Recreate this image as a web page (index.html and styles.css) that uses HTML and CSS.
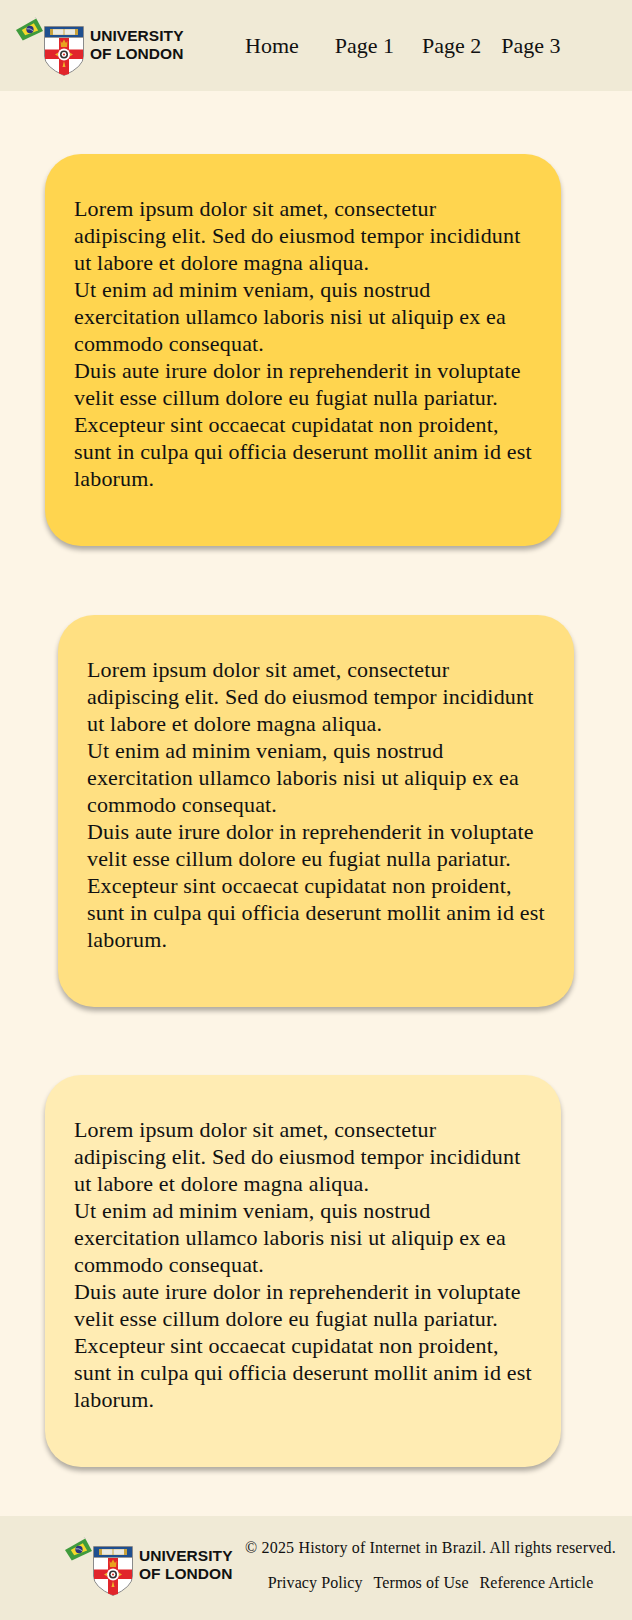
FILE: index.html
```html
<!DOCTYPE html>
<html>
  <head>
    <meta charset="UTF-8">
    <title>History of Internet in Brazil</title>
    <link rel="stylesheet" href="styles.css">
  </head>
  <body>
    <svg class="defs" width="0" height="0">
      <symbol id="flag" viewBox="0 0 28 24">
        <path d="M0 13 L21 1 L28 14 L7 24 Z" fill="#3f9b3c"/>
        <path d="M6 13 L18.5 6 L23 13.5 L9.5 18.5 Z" fill="#f4d92a"/>
        <circle cx="14.5" cy="12.5" r="3.8" fill="#27357e"/>
        <path d="M11 11.8 Q14.5 11 17.8 13.8" stroke="#e8e8e8" stroke-width=".7" fill="none"/>
        <path d="M21 1 L20 0" stroke="#bbb" stroke-width="1"/>
      </symbol>
      <symbol id="shield" viewBox="0 0 40 50">
        <path d="M.5 .5 H39.5 V30 Q39.5 41 20 49.5 Q.5 41 .5 30 Z" fill="#fff" stroke="#8a8a8a"/>
        <path d="M1 1 H39 V11 H1 Z" fill="#1f4f8f"/>
        <path d="M6 3 H34 V9 H6 Z" fill="#c9a23c"/>
        <path d="M9 3.2 H19.5 V8.8 H9 Z M20.5 3.2 H31 V8.8 H20.5 Z" fill="#e9e9e4"/>
        <path d="M1 11 H39 V12 H1 Z" fill="#9a9a9a"/>
        <path d="M15 12 H25 V48 L20 49.2 L15 47.5 Z" fill="#e1252b"/>
        <path d="M1 23.5 H39 V33 H1 Z" fill="#e1252b"/>
        <path d="M16.5 15 L18 17 L20 13.5 L22 17 L23.5 15 L23 21 H17 Z" fill="#e9a21f"/>
        <circle cx="20" cy="28.5" r="6" fill="#fff"/>
        <circle cx="20" cy="28.5" r="4" fill="#333"/>
        <circle cx="20" cy="28.5" r="2.4" fill="#fff"/>
        <circle cx="20" cy="28.5" r="1.1" fill="#d8332c"/>
        <path d="M20 35 L21.5 41 H18.5 Z M11 28.5 L14 26.8 V30.2 Z M29 28.5 L26 26.8 V30.2 Z" fill="#f0b429"/>
      </symbol>
    </svg>

    <header class="site-header">
      <a class="logo" href="#">
        <svg class="logo-flag"><use href="#flag"/></svg>
        <svg class="logo-shield"><use href="#shield"/></svg>
        <span class="logo-text">UNIVERSITY<br>OF LONDON</span>
      </a>
      <nav class="nav">
        <a href="#">Home</a>
        <a href="#">Page 1</a>
        <a href="#">Page 2</a>
        <a href="#">Page 3</a>
      </nav>
    </header>

    <main class="content">
      <section class="card card-a">
        <p>Lorem ipsum dolor sit amet, consectetur<br>
        adipiscing elit. Sed do eiusmod tempor incididunt<br>
        ut labore et dolore magna aliqua.<br>
        Ut enim ad minim veniam, quis nostrud<br>
        exercitation ullamco laboris nisi ut aliquip ex ea<br>
        commodo consequat.<br>
        Duis aute irure dolor in reprehenderit in voluptate<br>
        velit esse cillum dolore eu fugiat nulla pariatur.<br>
        Excepteur sint occaecat cupidatat non proident,<br>
        sunt in culpa qui officia deserunt mollit anim id est<br>
        laborum.</p>
      </section>
      <section class="card card-b">
        <p>Lorem ipsum dolor sit amet, consectetur<br>
        adipiscing elit. Sed do eiusmod tempor incididunt<br>
        ut labore et dolore magna aliqua.<br>
        Ut enim ad minim veniam, quis nostrud<br>
        exercitation ullamco laboris nisi ut aliquip ex ea<br>
        commodo consequat.<br>
        Duis aute irure dolor in reprehenderit in voluptate<br>
        velit esse cillum dolore eu fugiat nulla pariatur.<br>
        Excepteur sint occaecat cupidatat non proident,<br>
        sunt in culpa qui officia deserunt mollit anim id est<br>
        laborum.</p>
      </section>
      <section class="card card-c">
        <p>Lorem ipsum dolor sit amet, consectetur<br>
        adipiscing elit. Sed do eiusmod tempor incididunt<br>
        ut labore et dolore magna aliqua.<br>
        Ut enim ad minim veniam, quis nostrud<br>
        exercitation ullamco laboris nisi ut aliquip ex ea<br>
        commodo consequat.<br>
        Duis aute irure dolor in reprehenderit in voluptate<br>
        velit esse cillum dolore eu fugiat nulla pariatur.<br>
        Excepteur sint occaecat cupidatat non proident,<br>
        sunt in culpa qui officia deserunt mollit anim id est<br>
        laborum.</p>
      </section>
    </main>

    <footer class="site-footer">
      <a class="logo" href="#">
        <svg class="logo-flag"><use href="#flag"/></svg>
        <svg class="logo-shield"><use href="#shield"/></svg>
        <span class="logo-text">UNIVERSITY<br>OF LONDON</span>
      </a>
      <div class="footer-info">
        <p>&copy; 2025 History of Internet in Brazil. All rights reserved.</p>
        <div class="footer-links">
          <a href="#">Privacy Policy</a>
          <a href="#">Termos of Use</a>
          <a href="#">Reference Article</a>
        </div>
      </div>
    </footer>
  </body>
</html>
```

FILE: styles.css
```css
* { margin: 0; padding: 0; box-sizing: border-box; }
body { background: #fdf5e6; color: #111; font-family: "Liberation Serif", "Times New Roman", serif; }
a { color: inherit; text-decoration: none; }
.defs { position: absolute; }

.site-header { height: 91px; background: #f0ead6; display: flex; align-items: flex-start; padding-left: 16px; }
.logo { display: flex; align-items: flex-start; width: 170px; }
.logo-flag { width: 27px; height: 24px; margin-top: 17px; flex: none; }
.logo-shield { width: 40px; height: 50px; margin: 26px 0 0 1px; flex: none; }
.logo-text { font-family: "Liberation Sans", Arial, sans-serif; font-weight: 700; font-size: 15.5px; line-height: 18px; letter-spacing: .05px; color: #111; margin: 27px 0 0 6px; white-space: nowrap; }

.nav { display: flex; margin: 32px 0 0 59px; font-size: 22px; line-height: 27px; }
.nav a:nth-child(2) { margin-left: 36px; }
.nav a:nth-child(3) { margin-left: 28px; }
.nav a:nth-child(4) { margin-left: 20px; }

.content { padding: 63.4px 0 48.6px; display: flex; flex-direction: column; gap: 68.5px; }
.card { width: 516px; height: 392px; margin-left: 45px; padding: 41px 20px 0 29px; border-radius: 36px; box-shadow: 0 4px 5px rgba(0, 0, 0, .3); font-size: 22px; line-height: 27px; letter-spacing: .17px; white-space: nowrap; }
.card-a { background: #ffd54f; }
.card-b { background: #ffe082; margin-left: 58px; }
.card-c { background: #ffecb3; }

.site-footer { height: 104px; background: #f0ead6; display: flex; align-items: flex-start; padding-left: 65px; }
.site-footer .logo-flag { margin-top: 21px; }
.site-footer .logo-shield { margin-top: 30px; }
.site-footer .logo-text { margin-top: 31px; }
.site-footer .logo { width: 180px; }
.footer-info { font-size: 16px; line-height: 22px; text-align: center; letter-spacing: .17px; padding-top: 21px; width: 371px; white-space: nowrap; }
.footer-links { display: flex; justify-content: center; gap: 11px; margin-top: 13px; font-size: 16px; letter-spacing: .08px; }
```
